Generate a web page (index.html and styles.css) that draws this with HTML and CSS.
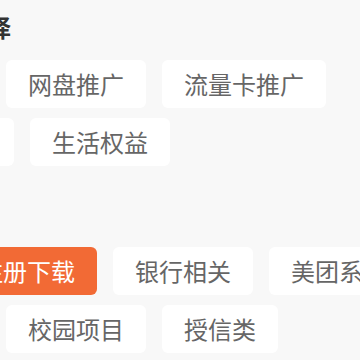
FILE: index.html
```html
<!DOCTYPE html>
<html lang="zh-CN">
<head>
  <meta charset="UTF-8">
  <title>类型选择</title>
  <meta name="viewport" content="width=device-width, initial-scale=1.0">
  <link rel="stylesheet" href="styles.css">
</head>
<body>
  <div class="page">
    <div class="section">
      <h2 class="title">推广类型选择</h2>
      <div class="row row-a">
        <div class="chip">网盘推广</div>
        <div class="chip">流量卡推广</div>
      </div>
      <div class="row row-b">
        <div class="chip">游戏推广</div>
        <div class="chip">生活权益</div>
      </div>
    </div>

    <div class="section section-2">
      <div class="row row-c">
        <div class="chip active">注册下载</div>
        <div class="chip">银行相关</div>
        <div class="chip">美团系列</div>
      </div>
      <div class="row row-a">
        <div class="chip">校园项目</div>
        <div class="chip">授信类</div>
      </div>
    </div>
  </div>
</body>
</html>
```

FILE: styles.css
```css
html, body {
  margin: 0;
  padding: 0;
  background: #f8f8f8;
  overflow: hidden;
  font-family: "Noto Sans CJK SC", "Noto Sans", sans-serif;
}

.page {
  width: 360px;
  height: 360px;
}

.title {
  margin: 0 0 6px;
  height: 54px;
  line-height: 54px;
  font-size: 24px;
  font-weight: 700;
  color: #333;
  white-space: nowrap;
  margin-left: -133px;
}

.row {
  display: flex;
  gap: 16px;
  margin-bottom: 10px;
  white-space: nowrap;
}

.row-a { margin-left: 6px; }
.row-b { margin-left: -126px; }
.row-c { margin-left: -43px; }

.section-2 {
  margin-top: 81px;
}

.chip {
  flex: none;
  height: 48px;
  line-height: 48px;
  padding: 0 22px;
  background: #fff;
  border-radius: 6px;
  font-size: 24px;
  color: #666;
}

.chip.active {
  background: #f26a35;
  color: #fff;
}
```
